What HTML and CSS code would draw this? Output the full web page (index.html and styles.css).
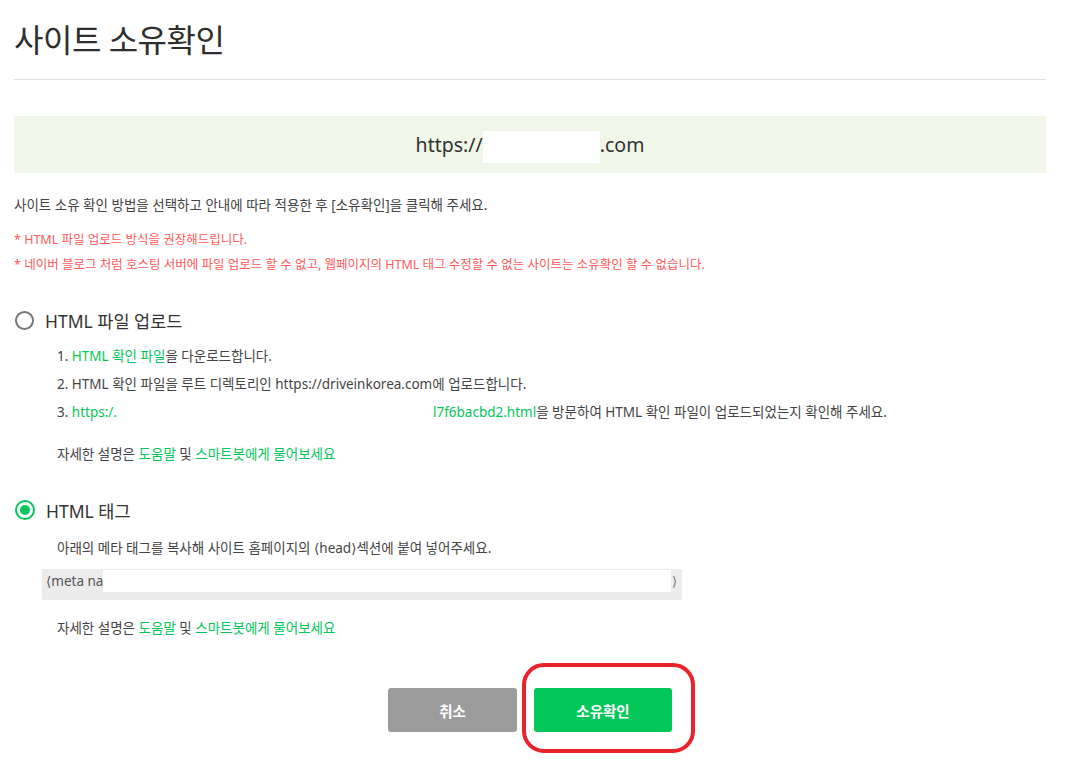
FILE: index.html
```html
<!DOCTYPE html>
<html lang="ko">
<head>
<meta charset="utf-8">
<title>사이트 소유확인</title>
<link rel="stylesheet" href="styles.css">
</head>
<body>
<div class="page">
  <h1 class="title">사이트 소유확인</h1>
  <div class="site-box">https://<span class="redact-url"></span>.com</div>
  <p class="desc">사이트 소유 확인 방법을 선택하고 안내에 따라 적용한 후 [소유확인]을 클릭해 주세요.</p>
  <p class="warn warn-first">* HTML 파일 업로드 방식을 권장해드립니다.</p>
  <p class="warn">* 네이버 블로그 처럼 호스팅 서버에 파일 업로드 할 수 없고, 웹페이지의 HTML 태그 수정할 수 없는 사이트는 소유확인 할 수 없습니다.</p>

  <div class="option option-file">
    <div class="radio-row"><span class="radio"></span><span class="radio-label">HTML 파일 업로드</span></div>
    <ol class="steps">
      <li>1. <a class="g">HTML 확인 파일</a>을 다운로드합니다.</li>
      <li>2. HTML 확인 파일을 루트 디렉토리인 https://driveinkorea.com에 업로드합니다.</li>
      <li>3. <a class="g">https:/.<span class="gap-redact"></span>l7f6bacbd2.html</a>을 방문하여 HTML 확인 파일이 업로드되었는지 확인해 주세요.</li>
    </ol>
    <p class="help">자세한 설명은 <a class="g">도움말</a> 및 <a class="g">스마트봇에게 물어보세요</a></p>
  </div>

  <div class="option option-tag">
    <div class="radio-row"><span class="radio checked"></span><span class="radio-label">HTML 태그</span></div>
    <p class="tag-desc">아래의 메타 태그를 복사해 사이트 홈페이지의 <span class="ang">&#x27E8;</span>head<span class="ang">&#x27E9;</span>섹션에 붙여 넣어주세요.</p>
    <div class="meta-box"><span class="meta-text"><span class="ang">&#x27E8;</span>meta na</span><span class="redact-meta"></span><span class="meta-end">&#x27E9;</span></div>
    <p class="help">자세한 설명은 <a class="g">도움말</a> 및 <a class="g">스마트봇에게 물어보세요</a></p>
  </div>

  <div class="buttons">
    <button class="btn btn-cancel">취소</button>
    <button class="btn btn-ok">소유확인</button>
    <span class="annot"></span>
  </div>
</div>
</body>
</html>
```

FILE: styles.css
```css
* { box-sizing: border-box; }
html, body { height: 100%; }
body {
  margin: 0;
  background: #fff;
  font-family: "Noto Sans", "Noto Sans CJK KR", sans-serif;
  color: #444;
}
.page {
  width: 1046px;
  padding-left: 14px;
  padding-bottom: 40px;
}
.title {
  margin: 0;
  padding: 20px 0 19px;
  font-size: 32px;
  line-height: 40px;
  font-weight: 400;
  color: #2e2e2e;
  letter-spacing: -0.5px;
  border-bottom: 1px solid #e1e1e1;
}
.site-box {
  margin-top: 36px;
  height: 57px;
  line-height: 57px;
  background: #f0f6e8;
  text-align: center;
  font-size: 19.5px;
  color: #333;
}
.redact-url {
  display: inline-block;
  width: 117px;
  height: 32px;
  background: #fff;
  vertical-align: middle;
}
.desc {
  margin: 22px 0 0;
  font-size: 13.5px;
  line-height: 20px;
  color: #444;
}
.warn {
  margin: 5px 0 0;
  font-size: 12.5px;
  line-height: 20px;
  color: #ff5a5a;
}
.warn-first { margin-top: 15px; }
.g { color: #03c75a; text-decoration: none; }
.ang { font-family: "DejaVu Sans", sans-serif; font-size: 1em; }

.option-file { margin-top: 34px; }
.option-tag { margin-top: 31px; }
.radio-row {
  display: flex;
  align-items: center;
  height: 22px;
}
.radio {
  width: 19px;
  height: 19px;
  border: 2px solid #777;
  border-radius: 50%;
  margin-left: 1px;
}
.radio.checked {
  width: 20px;
  height: 20px;
  border-color: #03c75a;
  display: flex;
  align-items: center;
  justify-content: center;
}
.radio.checked::after {
  content: "";
  width: 10px;
  height: 10px;
  border-radius: 50%;
  background: #03c75a;
}
.radio-label {
  margin-left: 11px;
  font-size: 17.5px;
  color: #333;
}
.steps {
  list-style: none;
  margin: 11px 0 0;
  padding: 0 0 0 43px;
  font-size: 13.5px;
  line-height: 28px;
  color: #444;
}
.gap-redact {
  display: inline-block;
  width: 316px;
}
.help {
  margin: 14px 0 0 43px;
  font-size: 13.5px;
  line-height: 28px;
  color: #444;
}
.tag-desc {
  margin: 17px 0 0 43px;
  font-size: 13.5px;
  line-height: 20px;
  color: #444;
}
.meta-box {
  margin: 11px 0 0 28px;
  width: 640px;
  height: 31px;
  background: #ececec;
  display: flex;
  align-items: flex-start;
  font-size: 13.5px;
  color: #555;
  white-space: nowrap;
}
.meta-text {
  padding-left: 4px;
  line-height: 24px;
  width: 61px;
  overflow: hidden;
}
.redact-meta {
  margin-top: 1px;
  width: 568px;
  height: 22px;
  background: #fff;
  flex: none;
}
.option-tag .help { margin-top: 14px; }
.meta-end {
  margin-left: auto;
  margin-right: 5px;
  line-height: 26px;
  color: #777;
  font-family: "DejaVu Sans", sans-serif;
  font-size: 13px;
}
.buttons {
  position: relative;
  display: flex;
  justify-content: center;
  gap: 17px;
  margin-top: 46px;
  width: 1032px;
}
.btn {
  height: 44px;
  border: 0;
  border-radius: 3px;
  color: #fff;
  font-family: "Noto Sans CJK KR", sans-serif;
  font-size: 14.5px;
  font-weight: 700;
}
.btn-cancel { width: 129px; background: #9b9b9b; }
.btn-ok { width: 138px; background: #03c75a; }
.annot {
  position: absolute;
  left: 508px;
  top: -25px;
  width: 173px;
  height: 90px;
  border: 4px solid #e8232a;
  border-radius: 22px;
}
```
